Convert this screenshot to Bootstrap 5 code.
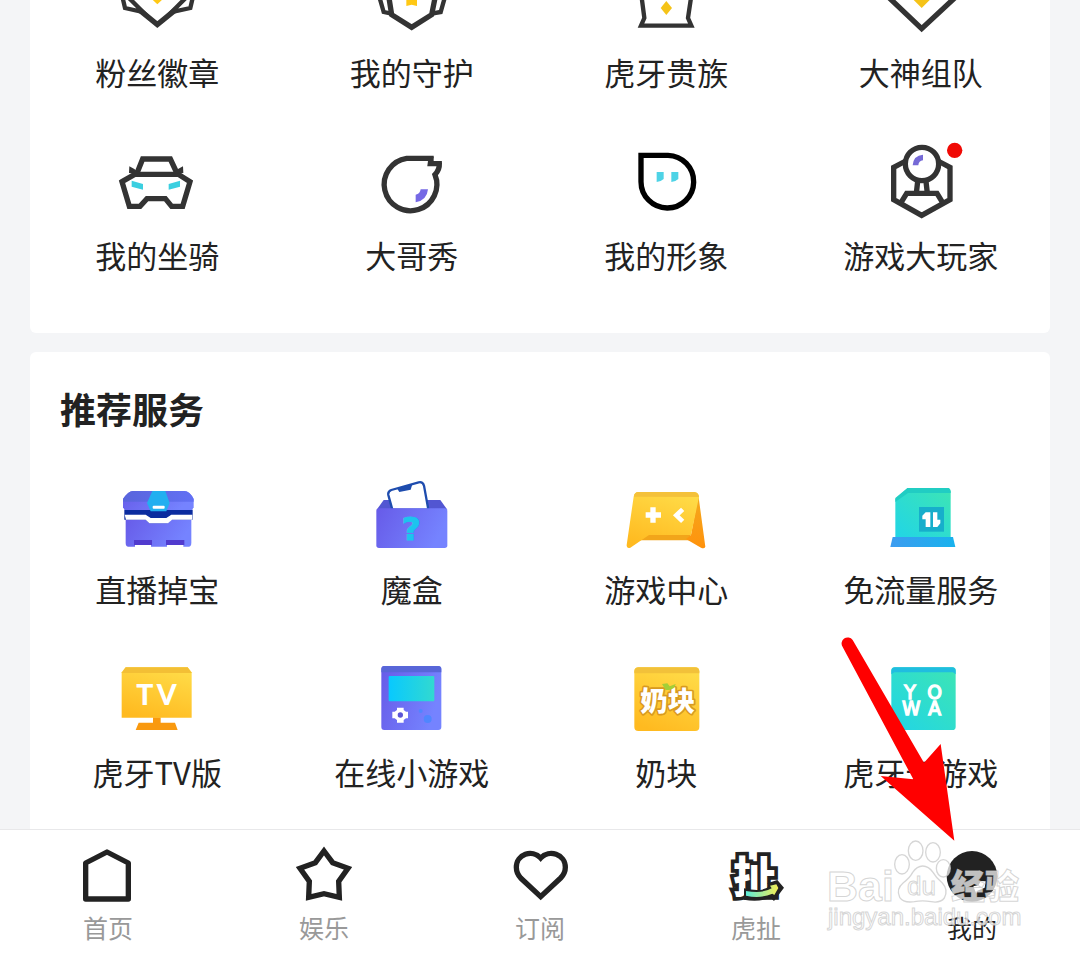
<!DOCTYPE html>
<html lang="zh-CN">
<head>
<meta charset="utf-8">
<meta name="viewport" content="width=device-width, initial-scale=1">
<title>我的</title>
<link href="https://cdn.jsdelivr.net/npm/bootstrap@5.3.0/dist/css/bootstrap.min.css" rel="stylesheet">
<style>
  body { background: #f4f5f7; color: #222; font-family: "Noto Sans CJK SC", sans-serif; }
  .page-main { padding: 0 30px; gap: 19px; }
  .panel { background: #fff; }
  .panel-top { border-radius: 0 0 6px 6px; padding-bottom: 58px; }
  .panel-services { border-radius: 6px 6px 0 0; padding: 32px 0; }
  .panel-title { font-size: 36px; line-height: 48px; font-weight: 700; margin: 0 0 39px; padding-left: 30px; }
  .tiles { row-gap: 45px; padding-right: 2px; }
  .tile { display: flex; flex-direction: column; align-items: center; gap: 8px; color: inherit; text-decoration: none; font-size: 31px; line-height: 40px; white-space: nowrap; }
  .tile svg { width: 110px; height: 90px; display: block; }
  .tile svg.cut { height: 44px; }
  .line { fill: none; stroke: #333; stroke-width: 16; }
  .line-thin { stroke-width: 13; }
  .tabbar { background: #fff; border-top: 1px solid #e8e8ea; z-index: 10; }
  .tab { display: flex; flex-direction: column; align-items: center; gap: 5px; padding: 16px 0 13px; color: #999; text-decoration: none; font-size: 25px; line-height: 32px; }
  .tab.active { color: #222; }
  .tab > svg:first-child { width: 60px; height: 60px; display: block; }
  .tabline { fill: none; stroke: #222; stroke-width: 16; }
  .pointer-overlay { position: absolute; right: 50px; bottom: 16px; width: 210px; height: 310px; pointer-events: none; }
  .wm { font-family: "Liberation Sans", "Noto Sans CJK SC", sans-serif; fill: #fff; fill-opacity: .72; stroke: #c8c8c8; stroke-opacity: .75; stroke-width: 1; }
</style>
</head>
<body class="d-flex flex-column min-vh-100">
<svg width="0" height="0" class="position-absolute" aria-hidden="true">
  <defs>
    <linearGradient id="violet" x2="1" y2=".3"><stop stop-color="#675be8"/><stop offset="1" stop-color="#7583ff"/></linearGradient>
    <linearGradient id="lid" x2="1" y2="0"><stop stop-color="#5965dc"/><stop offset="1" stop-color="#6270f4"/></linearGradient>
    <linearGradient id="screen" x2="1" y2="0"><stop stop-color="#08c9ff"/><stop offset="1" stop-color="#32d9d0"/></linearGradient>
    <linearGradient id="gold" x1=".7" y1="0" x2=".3" y2="1"><stop stop-color="#ffdb47"/><stop offset="1" stop-color="#ffba20"/></linearGradient>
    <linearGradient id="amber" x2="0" y2="1"><stop stop-color="#f3a91d"/><stop offset="1" stop-color="#ff920d"/></linearGradient>
    <linearGradient id="mint" x1="1" y1="0" x2="0" y2="1"><stop stop-color="#3de5b4"/><stop offset="1" stop-color="#21d5e6"/></linearGradient>
    <linearGradient id="base" x2="1" y2="0"><stop stop-color="#3c9cf0"/><stop offset="1" stop-color="#18b2ed"/></linearGradient>
    <linearGradient id="smile" x2="1" y2="0"><stop stop-color="#5cebd8"/><stop offset="1" stop-color="#f4ee55"/></linearGradient>
  </defs>
</svg>

<main class="page-main d-flex flex-column flex-grow-1">
  <section class="panel panel-top">
    <div class="tiles row row-cols-4 gx-0">
      <a href="#" class="tile col">
        <svg class="cut" viewBox="127 0 330 132" aria-hidden="true"><path class="line" d="M238 29L293 74L348 29"/><path class="line line-thin" d="M189-6L196 24L250 36L206-8M399-6L392 24L336 36L380-8"/><path d="M272-7L293 13L314-7Z" fill="#ffc814"/></svg>
        粉丝徽章</a>
      <a href="#" class="tile col">
        <svg class="cut" viewBox="890 0 330 132" aria-hidden="true"><path class="line" d="M986-6L994 44L1054 82L1114 44L1124-6"/><path class="line line-thin" d="M958-6L970 36L994 41M1153-6L1141 36L1114 41"/><path d="M1038-4V18L1054 14L1070 18V-4Z" fill="#ffc814"/></svg>
        我的守护</a>
      <a href="#" class="tile col">
        <svg class="cut" viewBox="94 0 330 132" aria-hidden="true"><path class="line line-thin" d="M187-20V0L194 54L184 77H335L325 54L333 0V-20Z"/><path d="M260 3L277 24L260 45L243 24Z" fill="#f5c318"/></svg>
        虎牙贵族</a>
      <a href="#" class="tile col">
        <svg class="cut" viewBox="857 0 330 132" aria-hidden="true"><path class="line" d="M925-8L1024 86L1125-8"/><path d="M996-4L1024 24L1052-4Z" fill="#f5c318"/></svg>
        大神组队</a>

      <a href="#" class="tile col">
        <svg viewBox="67 21 330 270" aria-hidden="true"><g class="line"><path d="M171 132L189 87H272L293 132"/><path d="M127 155L165 133H296L331 155L309 229H276L257 206H202L181 229H149Z"/></g><path d="M149 109L164 117L181 132L148 129ZM310 109L295 117L278 132L311 129Z" fill="#333"/><path d="M156 152L190 162V179L156 170ZM301 152L267 162V179L301 170Z" fill="#3bcfe0"/></svg>
        我的坐骑</a>
      <a href="#" class="tile col">
        <svg viewBox="830 21 330 270" aria-hidden="true"><path class="line" d="M1053 79L1050 101H1077Q1078 119 1064 134A79 79 0 1 1 979 85H1060"/><path d="M1021 178H1043Q1040 211 1006 217V194Q1019 192 1021 178Z" fill="#7569e5"/></svg>
        大哥秀</a>
      <a href="#" class="tile col">
        <svg viewBox="64 21 330 270" aria-hidden="true"><path d="M154 76H235A79 79 0 1 1 154 155Z" fill="none" stroke="#000" stroke-width="16"/><path d="M201 126H222V147Q214 155 201 156ZM245 126H266V147Q258 155 245 156Z" fill="#4ed3e6"/></svg>
        我的形象</a>
      <a href="#" class="tile col">
        <svg viewBox="827 21 330 270" aria-hidden="true"><g class="line"><circle cx="995" cy="102" r="50"/><path d="M946 93L910 112V209L994 256L1079 209V112L1043 93"/><path d="M982 154L978 190M1007 154L1011 190"/><path d="M932 218L949 190H1040L1057 218"/></g><path d="M998 74V91Q985 93 984 106H967Q969 76 998 74Z" fill="#7569d6"/><circle cx="1093" cy="61" r="23" fill="#f00a05"/></svg>
        游戏大玩家</a>
    </div>
  </section>

  <section class="panel panel-services flex-grow-1">
    <h2 class="panel-title">推荐服务</h2>
    <div class="tiles row row-cols-4 gx-0">
      <a href="#" class="tile col">
        <svg viewBox="67 3 330 270" aria-hidden="true"><path d="M138 140H335V219Q335 230 327 230H146Q138 230 138 219Z" fill="url(#violet)"/><path d="M163 210H217V225H163ZM259 210H314V225H259Z" fill="#513bce"/><path d="M166 225H214V231H166ZM262 225H311V231H262Z" fill="#fff"/><path d="M134 119H339V149H275L264 160H209L198 149H134Z" fill="#0b2c9f"/><path d="M135 134H198L213 144H260L275 134H338V149H277L265 160H209L198 149H139Z" fill="#fff"/><path d="M130 87Q146 63 160 63H314Q330 63 342 87V112L337 120H135L130 112Z" fill="url(#violet)"/><path d="M130 95V87Q146 63 160 63H314Q330 63 342 87V95Z" fill="url(#lid)"/><path d="M218 63H257L270 99L260 124H213L202 99Z" fill="#22aff0"/><rect x="219" y="107" width="36" height="9" rx="3" fill="#fff"/></svg>
        直播掉宝</a>
      <a href="#" class="tile col">
        <svg viewBox="830 3 330 270" aria-hidden="true"><path d="M889 119L910 90H1080L1101 119Z" fill="#5256d2"/><path d="M936 119L924 75Q922 64 933 60L1015 37Q1028 34 1031 47L1044 119Z" fill="#fff" stroke="#1e4cae" stroke-width="7"/><path d="M950 55L957 66L991 59L996 43Z" fill="#1e4cae"/><rect x="888" y="115" width="213" height="119" rx="8" fill="url(#violet)"/><text x="993" y="211" text-anchor="middle" font-family="DejaVu Sans, sans-serif" font-weight="700" font-size="98" fill="#1cc4ee" stroke="#1cc4ee" stroke-width="3">?</text></svg>
        魔盒</a>
      <a href="#" class="tile col">
        <svg viewBox="64 3 330 270" aria-hidden="true"><path d="M145 192H300L310 211H140Z" fill="#f2a51a"/><path d="M326 75L347 230Q344 238 334 233L289 207L304 195Z" fill="url(#amber)"/><path d="M146 66H314Q327 67 328 81L304 195H178L122 233Q110 237 111 225L132 80Q134 66 146 66Z" fill="url(#gold)"/><path d="M133 80Q134 66 146 66H314Q327 67 328 81Z" fill="#f4c13a"/><path d="M182 112H198V127H214V143H198V158H182V143H168V127H182Z" fill="#fff"/><path d="M279 118L260 136L279 154" fill="none" stroke="#fff" stroke-width="14"/></svg>
        游戏中心</a>
      <a href="#" class="tile col">
        <svg viewBox="827 3 330 270" aria-hidden="true"><path d="M915 87L953 54H1074Q1081 56 1081 64V203H915Z" fill="url(#mint)"/><path d="M915 84L951 54H1074Q1081 56 1081 69H953L915 96Z" fill="#21cdc3"/><path d="M907 201H1088L1095 231H900Z" fill="url(#base)"/><rect x="986" y="111" width="75" height="74" fill="#17aecb"/><path d="M1006 127H1020V171H1006V148H996V137ZM1028 127H1041V149H1050V160L1041 171H1028Z" fill="#fff"/></svg>
        免流量服务</a>

      <a href="#" class="tile col">
        <svg viewBox="67 12 330 270" aria-hidden="true"><path d="M220 202H243V218H286L294 240H168L177 218H220Z" fill="#f9990f"/><path d="M126 67L138 52H324L336 67V203H126Z" fill="url(#gold)"/><path d="M126 69L138 52H324L336 69Z" fill="#f3bf35"/><text x="170 231" y="164" font-family="Lato, sans-serif" font-weight="900" font-size="85" fill="#fff">TV</text></svg>
        虎牙TV版</a>
      <a href="#" class="tile col">
        <svg viewBox="830 12 330 270" aria-hidden="true"><rect x="903" y="48" width="180" height="192" rx="9" fill="url(#violet)"/><path d="M903 67V57Q904 48 912 48H1074Q1083 49 1083 57V67Z" fill="#5866d8"/><rect x="925" y="78" width="137" height="76" rx="3" fill="url(#screen)"/><path d="M950 173H970V180L977 185H983V205H977L970 210V218H950V210L943 205H936V185H943L950 180Z" fill="#fff"/><circle cx="960" cy="195" r="8" fill="#5b55d6"/><circle cx="1042" cy="207" r="12" fill="#4f86ff"/><circle cx="1021" cy="183" r="6" fill="#4f86ff"/></svg>
        在线小游戏</a>
      <a href="#" class="tile col">
        <svg viewBox="64 102 330 270" aria-hidden="true"><rect x="134" y="142" width="195" height="191" rx="12" fill="url(#gold)"/><path d="M134 160V153Q136 142 147 142H316Q328 143 329 153V160Z" fill="#f2c13a"/><text x="234" y="273" text-anchor="middle" font-weight="900" font-size="82" fill="#fff" stroke="#d99a20" stroke-width="10" stroke-linejoin="round" paint-order="stroke">奶块</text><path d="M217 192L233 190L240 199L258 192Q255 208 238 210H228Z" fill="#a4cf37"/></svg>
        奶块</a>
      <a href="#" class="tile col">
        <svg viewBox="827 102 330 270" aria-hidden="true"><rect x="903" y="142" width="193" height="188" rx="10" fill="url(#mint)"/><path d="M903 163V151Q905 142 914 142H1086Q1095 143 1096 151V163L1088 157H912Z" fill="#20bde0"/><g font-family="DejaVu Sans, sans-serif" font-size="56" fill="#fff" stroke="#fff" stroke-width="4"><text x="942 1011" y="236">YO</text><text x="935 1014" y="286">WA</text></g></svg>
        虎牙云游戏</a>
    </div>
  </section>
</main>

<nav class="tabbar sticky-bottom" aria-label="主导航">
  <div class="row row-cols-5 gx-0">
    <a href="#" class="tab col">
      <svg viewBox="54 78 180 180" aria-hidden="true"><path class="tabline" stroke-linejoin="round" d="M77 129L141 96L205 129V237H77Z"/></svg>
      首页</a>
    <a href="#" class="tab col">
      <svg viewBox="702 78 180 180" aria-hidden="true"><path class="tabline" d="M792 93L818 128L864 145L836 184L838 232L792 221L746 232L748 184L720 145L766 128Z"/></svg>
      娱乐</a>
    <a href="#" class="tab col">
      <svg viewBox="90 78 180 180" aria-hidden="true"><path class="tabline" d="M182 230L122 174Q109 160 109 142C109 102 157 87 182 114C207 87 256 102 256 142Q256 160 242 174Z"/></svg>
      订阅</a>
    <a href="#" class="tab col">
      <svg viewBox="738 78 180 180" aria-hidden="true"><text x="824" y="220" text-anchor="middle" font-weight="900" font-size="130" fill="#fff" stroke="#222" stroke-width="22" paint-order="stroke">扯</text><path d="M792 205Q848 218 869 198L862 190L892 180L912 203L882 243L871 233Q835 248 792 239Z" fill="#222"/><path d="M798 213Q850 221 875 205L870 197L889 193L895 204L883 225L877 221Q841 237 798 227Z" fill="url(#smile)"/></svg>
      虎扯</a>
    <a href="#" class="tab col active position-relative" aria-current="page">
      <svg viewBox="396 78 180 180" aria-hidden="true"><circle cx="486" cy="169" r="76" fill="#222"/><path d="M490 199L506 195L512 183L527 184L524 203L502 212L499 221Z" fill="#fff"/></svg>
      我的
      <svg class="pointer-overlay" viewBox="820 630 210 310" aria-hidden="true">
        <g transform="translate(590 620) scale(.33333)"><path fill="#f00" d="M758 81A18 18 0 1 1 788 60L1002 428L1052 372L1093 662L872 468L970 478Z"/></g>
        <g class="wm">
          <g transform="translate(810 820) scale(.33333)" stroke-width="4"><ellipse cx="276" cy="133" rx="22" ry="29"/><ellipse cx="317" cy="92" rx="22" ry="29"/><ellipse cx="369" cy="97" rx="22" ry="29"/><ellipse cx="400" cy="145" rx="21" ry="26"/><path d="M338 138Q356 138 369 157Q379 174 397 189Q416 210 403 234Q391 250 363 245Q338 240 313 245Q281 250 269 232Q257 207 280 188Q300 173 308 157Q321 138 338 138Z"/></g>
          <text x="827" y="901" font-size="43" font-weight="700">Bai</text>
          <text x="907" y="895" font-size="26">du</text>
          <text x="951" y="899" font-size="34" font-weight="900">经验</text>
          <text x="828" y="925" font-size="24">jingyan.baidu.com</text>
        </g>
      </svg>
    </a>
  </div>
</nav>
<script src="https://cdn.jsdelivr.net/npm/bootstrap@5.3.0/dist/js/bootstrap.bundle.min.js"></script>
</body>
</html>
